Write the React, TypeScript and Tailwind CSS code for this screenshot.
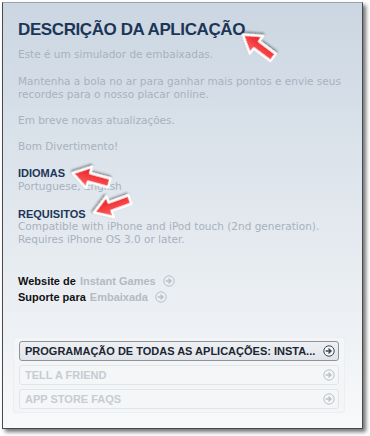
import React from 'react';

const BODY_FONT = { fontFamily: '"DejaVu Sans", "Noto Sans", sans-serif' };
const HEAD_FONT = { fontFamily: '"Liberation Sans", Arial, sans-serif' };

function CircleArrow({ dark = false }: { dark?: boolean }) {
  const c = dark ? '#3b4656' : '#b9c0c8';
  return (
    <svg width="12" height="12" viewBox="0 0 12 12" className="shrink-0">
      <circle cx="6" cy="6" r="5.2" fill={dark ? '#f4f6f8' : 'none'} stroke={c} strokeWidth="1" />
      <path d="M3.2 6h4.6M5.9 3.9 8.1 6 5.9 8.1" fill="none" stroke={c} strokeWidth="1.4" strokeLinecap="round" strokeLinejoin="round" />
    </svg>
  );
}

// red pointer arrow, drawn pointing right then rotated
function RedArrow({ x, y, angle }: { x: number; y: number; angle: number }) {
  return (
    <svg
      width="46"
      height="30"
      viewBox="0 0 46 30"
      className="pointer-events-none absolute"
      style={{ left: x - 23, top: y - 15, transform: `rotate(${angle}deg)` }}
    >
      <defs>
        <linearGradient id={`g${x}${y}`} x1="0" y1="0" x2="0" y2="1">
          <stop offset="0" stopColor="#ff6a6a" />
          <stop offset="1" stopColor="#e8141a" />
        </linearGradient>
        <filter id={`s${x}${y}`} x="-30%" y="-30%" width="160%" height="160%">
          <feDropShadow dx="1" dy="1.5" stdDeviation="1.2" floodColor="#000" floodOpacity="0.45" />
        </filter>
      </defs>
      <path
        d="M4 10.5 L25 10.5 L25 4 L42 15 L25 26 L25 19.5 L4 19.5 Z"
        fill={`url(#g${x}${y})`}
        stroke="#fff"
        strokeWidth="2.4"
        strokeLinejoin="round"
        filter={`url(#s${x}${y})`}
      />
    </svg>
  );
}

function LinkRow({ label, value }: { label: string; value: string }) {
  return (
    <div className="flex h-[16px] items-center gap-[4px] text-[11px]" style={HEAD_FONT}>
      <span className="font-bold text-[#111]">{label}</span>
      <span className="font-bold text-[#b3bac2]">{value}</span>
      <span className="ml-[3px]">
        <CircleArrow />
      </span>
    </div>
  );
}

function ActionButton({ label, active = false }: { label: string; active?: boolean }) {
  return (
    <div
      className={
        active
          ? 'flex h-[20px] items-center justify-between rounded-[3px] border border-[#8d939b] bg-gradient-to-b from-[#eef0f3] to-[#e1e5ea] pl-[5px] pr-[3px]'
          : 'flex h-[20px] items-center justify-between rounded-[3px] border border-[#e1e5e9] bg-[#f5f6f8] pl-[5px] pr-[3px]'
      }
    >
      <span
        className={active ? 'text-[11px] font-bold text-[#1b2533]' : 'text-[11px] font-bold text-[#c6ccd3]'}
        style={HEAD_FONT}
      >
        {label}
      </span>
      <CircleArrow dark={active} />
    </div>
  );
}

export default function App() {
  return (
    <div className="relative h-[436px] w-[370px] overflow-hidden bg-white">
      <div className="ml-[2px] mt-[2px] h-[427px] w-[361px] border border-t-[#9aa2ab] border-[#4a4a4a] bg-gradient-to-b from-[#cbd6e2] via-[#e2e8ee] to-[#f8f9fa] shadow-[3px_3px_4px_rgba(0,0,0,0.55)]">
        <div className="px-[15px] pt-[16px]">
          <h1 className="text-[17px] font-bold leading-[22px] tracking-[-0.4px] text-[#1c3658]" style={HEAD_FONT}>
            DESCRIÇÃO DA APLICAÇÃO
          </h1>

          <div className="mt-[7px] text-[10.5px] leading-[13px] text-[#a7b2be]" style={BODY_FONT}>
            <p className="mb-[14px]">Este é um simulador de embaixadas.</p>
            <p className="mb-[13px]">
              Mantenha a bola no ar para ganhar mais pontos e envie seus recordes para o nosso placar online.
            </p>
            <p className="mb-[13px]">Em breve novas atualizações.</p>
            <p>Bom Divertimento!</p>
          </div>

          <h2 className="mt-[14px] text-[11px] font-bold leading-[13px] text-[#1c3658]" style={HEAD_FONT}>
            IDIOMAS
          </h2>
          <p className="text-[10.5px] leading-[13px] text-[#a7b2be]" style={BODY_FONT}>
            Portuguese, English
          </p>

          <h2 className="mt-[15px] text-[11px] font-bold leading-[13px] text-[#1c3658]" style={HEAD_FONT}>
            REQUISITOS
          </h2>
          <p className="-mt-[1px] text-[10.5px] leading-[13px] text-[#a7b2be]" style={BODY_FONT}>
            Compatible with iPhone and iPod touch (2nd generation).
            <br />
            Requires iPhone OS 3.0 or later.
          </p>

          <div className="mt-[27px] flex flex-col">
            <LinkRow label="Website de" value="Instant Games" />
            <LinkRow label="Suporte para" value="Embaixada" />
          </div>
        </div>

        <div className="ml-[10px] mt-[32px] flex w-[332px] flex-col gap-[4px] rounded-[3px] border border-[#eceef1] bg-[#f3f5f7] px-[5px] py-[3px]">
          <ActionButton label="PROGRAMAÇÃO DE TODAS AS APLICAÇÕES: INSTA..." active />
          <ActionButton label="TELL A FRIEND" />
          <ActionButton label="APP STORE FAQS" />
        </div>
      </div>

      <RedArrow x={258} y={46} angle={-143} />
      <RedArrow x={91} y={178} angle={195} />
      <RedArrow x={112} y={206} angle={160} />
    </div>
  );
}
